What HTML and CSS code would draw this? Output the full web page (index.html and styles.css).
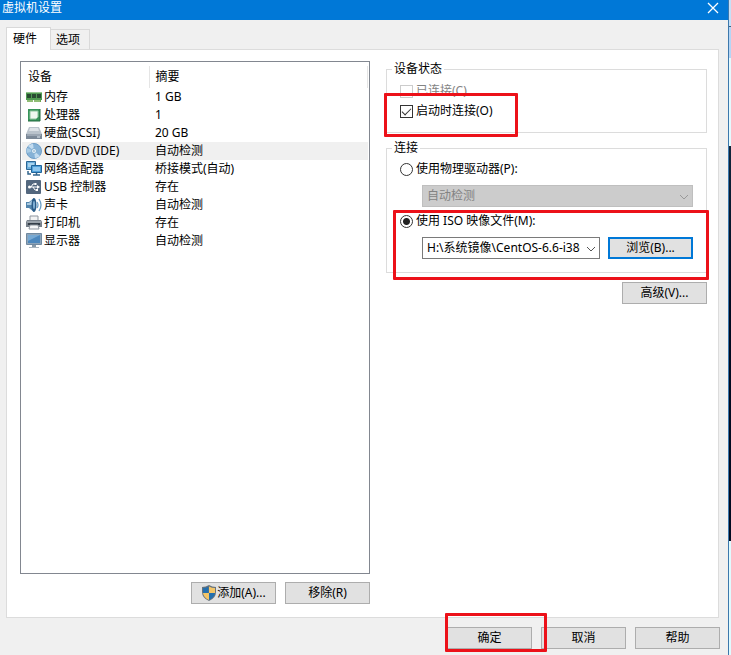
FILE: index.html
```html
<!DOCTYPE html>
<html lang="zh-CN">
<head>
<meta charset="utf-8">
<title>虚拟机设置</title>
<link rel="stylesheet" href="styles.css">
</head>
<body>
<div class="screen">
  <main class="dialog">
    <header class="titlebar">
      <h1>虚拟机设置</h1>
      <button class="close" type="button" aria-label="关闭">
        <svg width="12" height="12" viewBox="0 0 12 12"><path d="M1 1l10 10M11 1L1 11" stroke="#fff" stroke-width="1.3" fill="none"/></svg>
      </button>
    </header>
    <nav class="tabs" role="tablist">
      <button class="tab active" type="button" role="tab" aria-selected="true">硬件</button>
      <button class="tab" type="button" role="tab" aria-selected="false">选项</button>
    </nav>
    <section class="panel">
      <div class="devices">
        <div class="list">
          <table>
            <thead><tr><th class="name">设备</th><th class="summary">摘要</th></tr></thead>
            <tbody>
              <tr><td><span class="device"><svg width="16" height="16" viewBox="0 0 16 16"><path d="M0 3h16v8H0z" fill="#4f9a51"/><path d="M0 3h16v1H0z" fill="#94c68f"/><path d="M1 5h4v4H1zM6 5h4v4H6zM11 5h4v4h-4z" fill="#284b31"/><path d="M1 11h6v2H1zM8 11h7v2H8z" fill="#6aa750"/><path d="M2 11v2M4 11v2M6 11v2M9 11v2M11 11v2M13 11v2" stroke="#d6e6b8" stroke-width=".7"/></svg>内存</span></td><td>1 GB</td></tr>
              <tr><td><span class="device"><svg width="16" height="16" viewBox="0 0 16 16"><path d="M2 2h12v12H2z" fill="#37945a"/><path d="M4 4h8v6l-2 2H4z" fill="#eef8ef" stroke="#8bc39b"/><path d="M2 14h12M14 2v12" stroke="#246a40"/></svg>处理器</span></td><td>1</td></tr>
              <tr><td><span class="device"><svg width="16" height="16" viewBox="0 0 16 16"><path d="M3 2h10l3 7H0z" fill="#bac3cc"/><path d="M4 3h8l1 3H3z" fill="#dde2e7"/><path d="M0 9h16v5H0z" fill="#7c8998"/><path d="M1 10h14" stroke="#bcc5cf"/><path d="M11 12h3" stroke="#e6f0f7"/></svg>硬盘(SCSI)</span></td><td>20 GB</td></tr>
              <tr class="selected"><td><span class="device"><svg width="16" height="16" viewBox="0 0 16 16"><circle cx="8" cy="8" r="7.5" fill="#86b2d7" stroke="#6d9dc6"/><path d="M8 8L2 3A8 8 0 0 1 7 .8zM8 8l6 5a8 8 0 0 1-5 2.2z" fill="#c3dcf0"/><path d="M8 8L.8 10A7 7 0 0 1 1 5z" fill="#a9cce6"/><circle cx="8" cy="8" r="2.5" fill="#e8f2f9" stroke="#7faccf"/><circle cx="8" cy="8" r="1" fill="#a6bfd0"/></svg>CD/DVD (IDE)</span></td><td>自动检测</td></tr>
              <tr><td><span class="device"><svg width="16" height="16" viewBox="0 0 16 16"><path d="M.5.5h9v8h-9z" fill="#6fb0dd" stroke="#2d6896"/><path d="M2 2h6v4H2z" fill="#a9d4ef"/><path d="M5.500 4.500h10v7h-10z" fill="#4f9fd8" stroke="#20649a"/><path d="M7 6h7v4H7z" fill="#8cc6ef"/><path d="M2 10v3h3M7 14h7M10.500 12v2" stroke="#33658d" stroke-width="1.500" fill="none"/></svg>网络适配器</span></td><td>桥接模式(自动)</td></tr>
              <tr><td><span class="device"><svg width="16" height="16" viewBox="0 0 16 16"><rect x="0" y="1" width="15" height="14" rx="1" fill="#53677e"/><path d="M3 8h9M5 8l2-3h2M7 8l2 3h2" stroke="#fff" fill="none"/><circle cx="3.500" cy="8" r="1.500" fill="#fff"/><path d="M11 6l3 2-3 2zM8.500 4h2v2h-2zM10 10h2v2h-2z" fill="#fff"/></svg>USB 控制器</span></td><td>存在</td></tr>
              <tr><td><span class="device"><svg width="16" height="16" viewBox="0 0 16 16"><path d="M0 5h3l5-4v14l-5-4H0z" fill="#5385ad"/><path d="M1 6h2l3-3v5H1z" fill="#a9c9df"/><ellipse cx="8" cy="8" rx="2.500" ry="7" fill="#2b5c88"/><ellipse cx="8" cy="8" rx="1" ry="4" fill="#84b4d8"/><path d="M11 5q2 3 0 6M13 2q4 6 0 12" stroke="#6b9fc6" fill="none" stroke-width="1.300"/></svg>声卡</span></td><td>自动检测</td></tr>
              <tr><td><span class="device"><svg width="16" height="16" viewBox="0 0 16 16"><path d="M4 1h8v5H4z" fill="#f2f3f4" stroke="#8d959e"/><path d="M1 5h14l1 2v5H0V7z" fill="#77808a"/><path d="M1 7h14" stroke="#bdc4ca"/><path d="M2 9h12" stroke="#343e48" stroke-width="2"/><path d="M4 10h8l1 4H3z" fill="#f5f6f7" stroke="#8d959e"/></svg>打印机</span></td><td>存在</td></tr>
              <tr><td><span class="device"><svg width="16" height="16" viewBox="0 0 16 16"><path d="M.5.5h15v11H.5z" fill="#8da4b9" stroke="#7089a0"/><path d="M2 2h12v8H2z" fill="#4c87bd"/><path d="M2 2h12L2 8z" fill="#77a9d3"/><path d="M6 12h4v2H6z" fill="#8799a9"/><path d="M3 14h10v1H3z" fill="#a9b5bf"/></svg>显示器</span></td><td>自动检测</td></tr>
            </tbody>
          </table>
        </div>
        <div class="actions">
          <button class="button" type="button"><svg width="16" height="16" viewBox="0 0 16 16"><path d="M8 0Q5 2 1 2v5q0 6 7 9 7-3 7-9V2Q11 2 8 0z" fill="#68737c"/><path d="M7.500 1.500V8H2V3q3 0 5.500-1.500zM8 8h6q-.5 4.500-6 7z" fill="#236fae"/><path d="M8 1.500Q11 3 14 3v5H8zM2 8h6v7Q2.500 12.500 2 8z" fill="#f3c567"/></svg>添加(A)...</button>
          <button class="button" type="button">移除(R)</button>
        </div>
      </div>
      <div class="settings">
        <fieldset class="group status">
          <legend>设备状态</legend>
          <label class="choice disabled"><input type="checkbox" disabled>已连接(C)</label>
          <label class="choice"><input type="checkbox" checked>启动时连接(O)</label>
          <span class="mark mark-status"></span>
        </fieldset>
        <fieldset class="group connection">
          <legend>连接</legend>
          <label class="choice"><input type="radio" name="source">使用物理驱动器(P):</label>
          <div class="field">
            <div class="combo">
              <select disabled aria-label="物理驱动器"><option>自动检测</option></select>
              <svg width="10" height="6" viewBox="0 0 10 6"><path d="M1 1l4 4 4-4" stroke="#999" fill="none"/></svg>
            </div>
          </div>
          <label class="choice"><input type="radio" name="source" checked>使用 ISO 映像文件(M):</label>
          <div class="field">
            <div class="combo">
              <select aria-label="ISO 映像文件"><option>H:\系统镜像\CentOS-6.6-i386</option></select>
              <svg width="10" height="6" viewBox="0 0 10 6"><path d="M1 1l4 4 4-4" stroke="#555" fill="none"/></svg>
            </div>
            <button class="button focused" type="button">浏览(B)...</button>
          </div>
          <span class="mark mark-iso"></span>
        </fieldset>
        <button class="button advanced" type="button">高级(V)...</button>
      </div>
    </section>
    <footer class="footer">
      <span class="confirm"><button class="button" type="button">确定</button><span class="mark mark-ok"></span></span>
      <button class="button" type="button">取消</button>
      <button class="button" type="button">帮助</button>
    </footer>
  </main>
  <div class="desktop"></div>
</div>
</body>
</html>
```
FILE: styles.css
```css
* { box-sizing: border-box; }
body, button, select, input {
  font-family: "Noto Sans", "Noto Sans CJK SC", sans-serif;
  font-size: 12px;
  line-height: 18px;
  color: #000;
}
body { margin: 0; }
svg { display: block; flex: none; }

.screen { display: flex; min-height: 100vh; }
.dialog {
  flex: 1;
  min-width: 0;
  display: flex;
  flex-direction: column;
  background: #f0f0f0;
  border-right: 1px solid #3c78ac;
}
.desktop {
  flex: none;
  width: 2px;
  background: linear-gradient(#c5e0f7 0 26px, #40627f 26px 27px, #b5d5f5 27px 58px, #e4faff 58px 146px, #10263c 146px, #000a20 300px 541px, #e0fbff 541px);
}

.titlebar {
  display: flex;
  justify-content: space-between;
  align-items: center;
  height: 20px;
  padding: 0 8px 0 2px;
  background: #0078d7;
}
.titlebar h1 {
  margin: 0;
  padding-bottom: 4px;
  font-size: 12px;
  line-height: 16px;
  font-weight: 400;
  color: #fff;
}
.close { padding: 0 1px 4px; border: 0; background: none; }

.tabs {
  display: flex;
  align-items: flex-end;
  height: 30px;
  padding: 0 6px;
}
.tab {
  height: 20px;
  padding: 0 9px 0 5px;
  margin-bottom: 1px;
  border: 1px solid #d9d9d9;
  border-left: 0;
  border-bottom: 0;
  background: #f0f0f0;
}
.tab.active {
  position: relative;
  height: 23px;
  width: 45px;
  padding: 0 6px;
  margin-bottom: 0;
  border-left: 1px solid #d9d9d9;
  background: #fff;
  text-align: left;
}

.panel {
  flex: 1;
  display: grid;
  grid-template-columns: minmax(0, 350fr) minmax(0, 321fr);
  gap: 16px;
  margin: -1px 9px 0 6px;
  padding: 11px 11px 13px 13px;
  border: 1px solid #dcdcdc;
  background: #fff;
}
.devices { display: flex; flex-direction: column; gap: 8px; }
.list {
  flex: 1;
  padding: 4px 1px;
  border: 1px solid #828790;
}
table { width: 100%; table-layout: fixed; border-collapse: collapse; }
th, td { padding: 0 0 0 6px; text-align: left; font-weight: 400; height: 18px; }
th { height: 22px; border-right: 1px solid #e5e5e5; }
th.name { width: 127px; }
td:first-child { padding-left: 4px; }
.selected { background: #f0f0f0; }
.device { display: flex; align-items: center; gap: 2px; }

.button {
  display: inline-flex;
  justify-content: center;
  align-items: center;
  flex: none;
  width: 85px;
  height: 22px;
  padding: 0;
  border: 1px solid #adadad;
  background: #e1e1e1;
}
.button.focused { border: 2px solid #0078d7; }
.actions { display: flex; justify-content: flex-end; gap: 9px; }

.group {
  position: relative;
  min-width: 0;
  margin: 0;
  border: 1px solid #dcdcdc;
}
.group legend { margin-left: -3px; padding: 0 2px; line-height: 16px; }
.status { height: 72px; padding: 4px 13px 0 8px; }
.connection { height: 133px; margin-top: 7px; padding: 3px 13px 0 8px; }
.settings { display: flex; flex-direction: column; }
.choice { display: flex; align-items: center; gap: 3px; height: 20px; padding-left: 5px; }
.choice.disabled { color: #838383; }
.choice input {
  appearance: none;
  flex: none;
  width: 13px;
  height: 13px;
  margin: 0;
  border: 1px solid #333;
  background: #fff;
}
.choice input:disabled { border-color: #ccc; }
.choice input[type="radio"] { border-radius: 50%; }
.choice input[type="radio"]:checked { background: radial-gradient(circle, #222 3px, #fff 4px); }
.choice input[type="checkbox"]:checked {
  display: grid;
  place-items: start center;
  padding-top: 2px;
}
.choice input[type="checkbox"]:checked::before {
  content: "";
  box-sizing: border-box;
  width: 9px;
  height: 5px;
  border: solid #333;
  border-width: 0 0 1px 1px;
  rotate: -45deg;
}
.field {
  display: flex;
  align-items: center;
  gap: 8px;
  height: 24px;
  padding-left: 27px;
}
.connection .choice + .field { margin: 5px 0 3px; }
.combo { position: relative; flex: 1; min-width: 0; }
.combo select {
  display: block;
  appearance: none;
  width: 100%;
  height: 22px;
  padding: 0 19px 0 4px;
  border: 1px solid #7a7a7a;
  border-radius: 0;
  background: #fff;
}
.combo select:disabled { border-color: #bfbfbf; background: #ccc; color: #838383; opacity: 1; }
.combo svg { position: absolute; right: 4px; top: 9px; pointer-events: none; }
.advanced { align-self: flex-end; margin-top: 9px; }

.footer {
  display: flex;
  justify-content: flex-end;
  gap: 9px;
  padding: 9px 8px 6px;
}
.confirm { position: relative; display: flex; }

.mark {
  position: absolute;
  border: 3px solid #ec1119;
  border-radius: 1px;
  pointer-events: none;
}
.mark-status { left: -3px; top: 16px; width: 134px; height: 44px; }
.mark-iso { left: 6px; right: -3px; top: 54px; height: 70px; }
.mark-ok { left: -2px; right: -15px; top: -14px; height: 39px; }
```
